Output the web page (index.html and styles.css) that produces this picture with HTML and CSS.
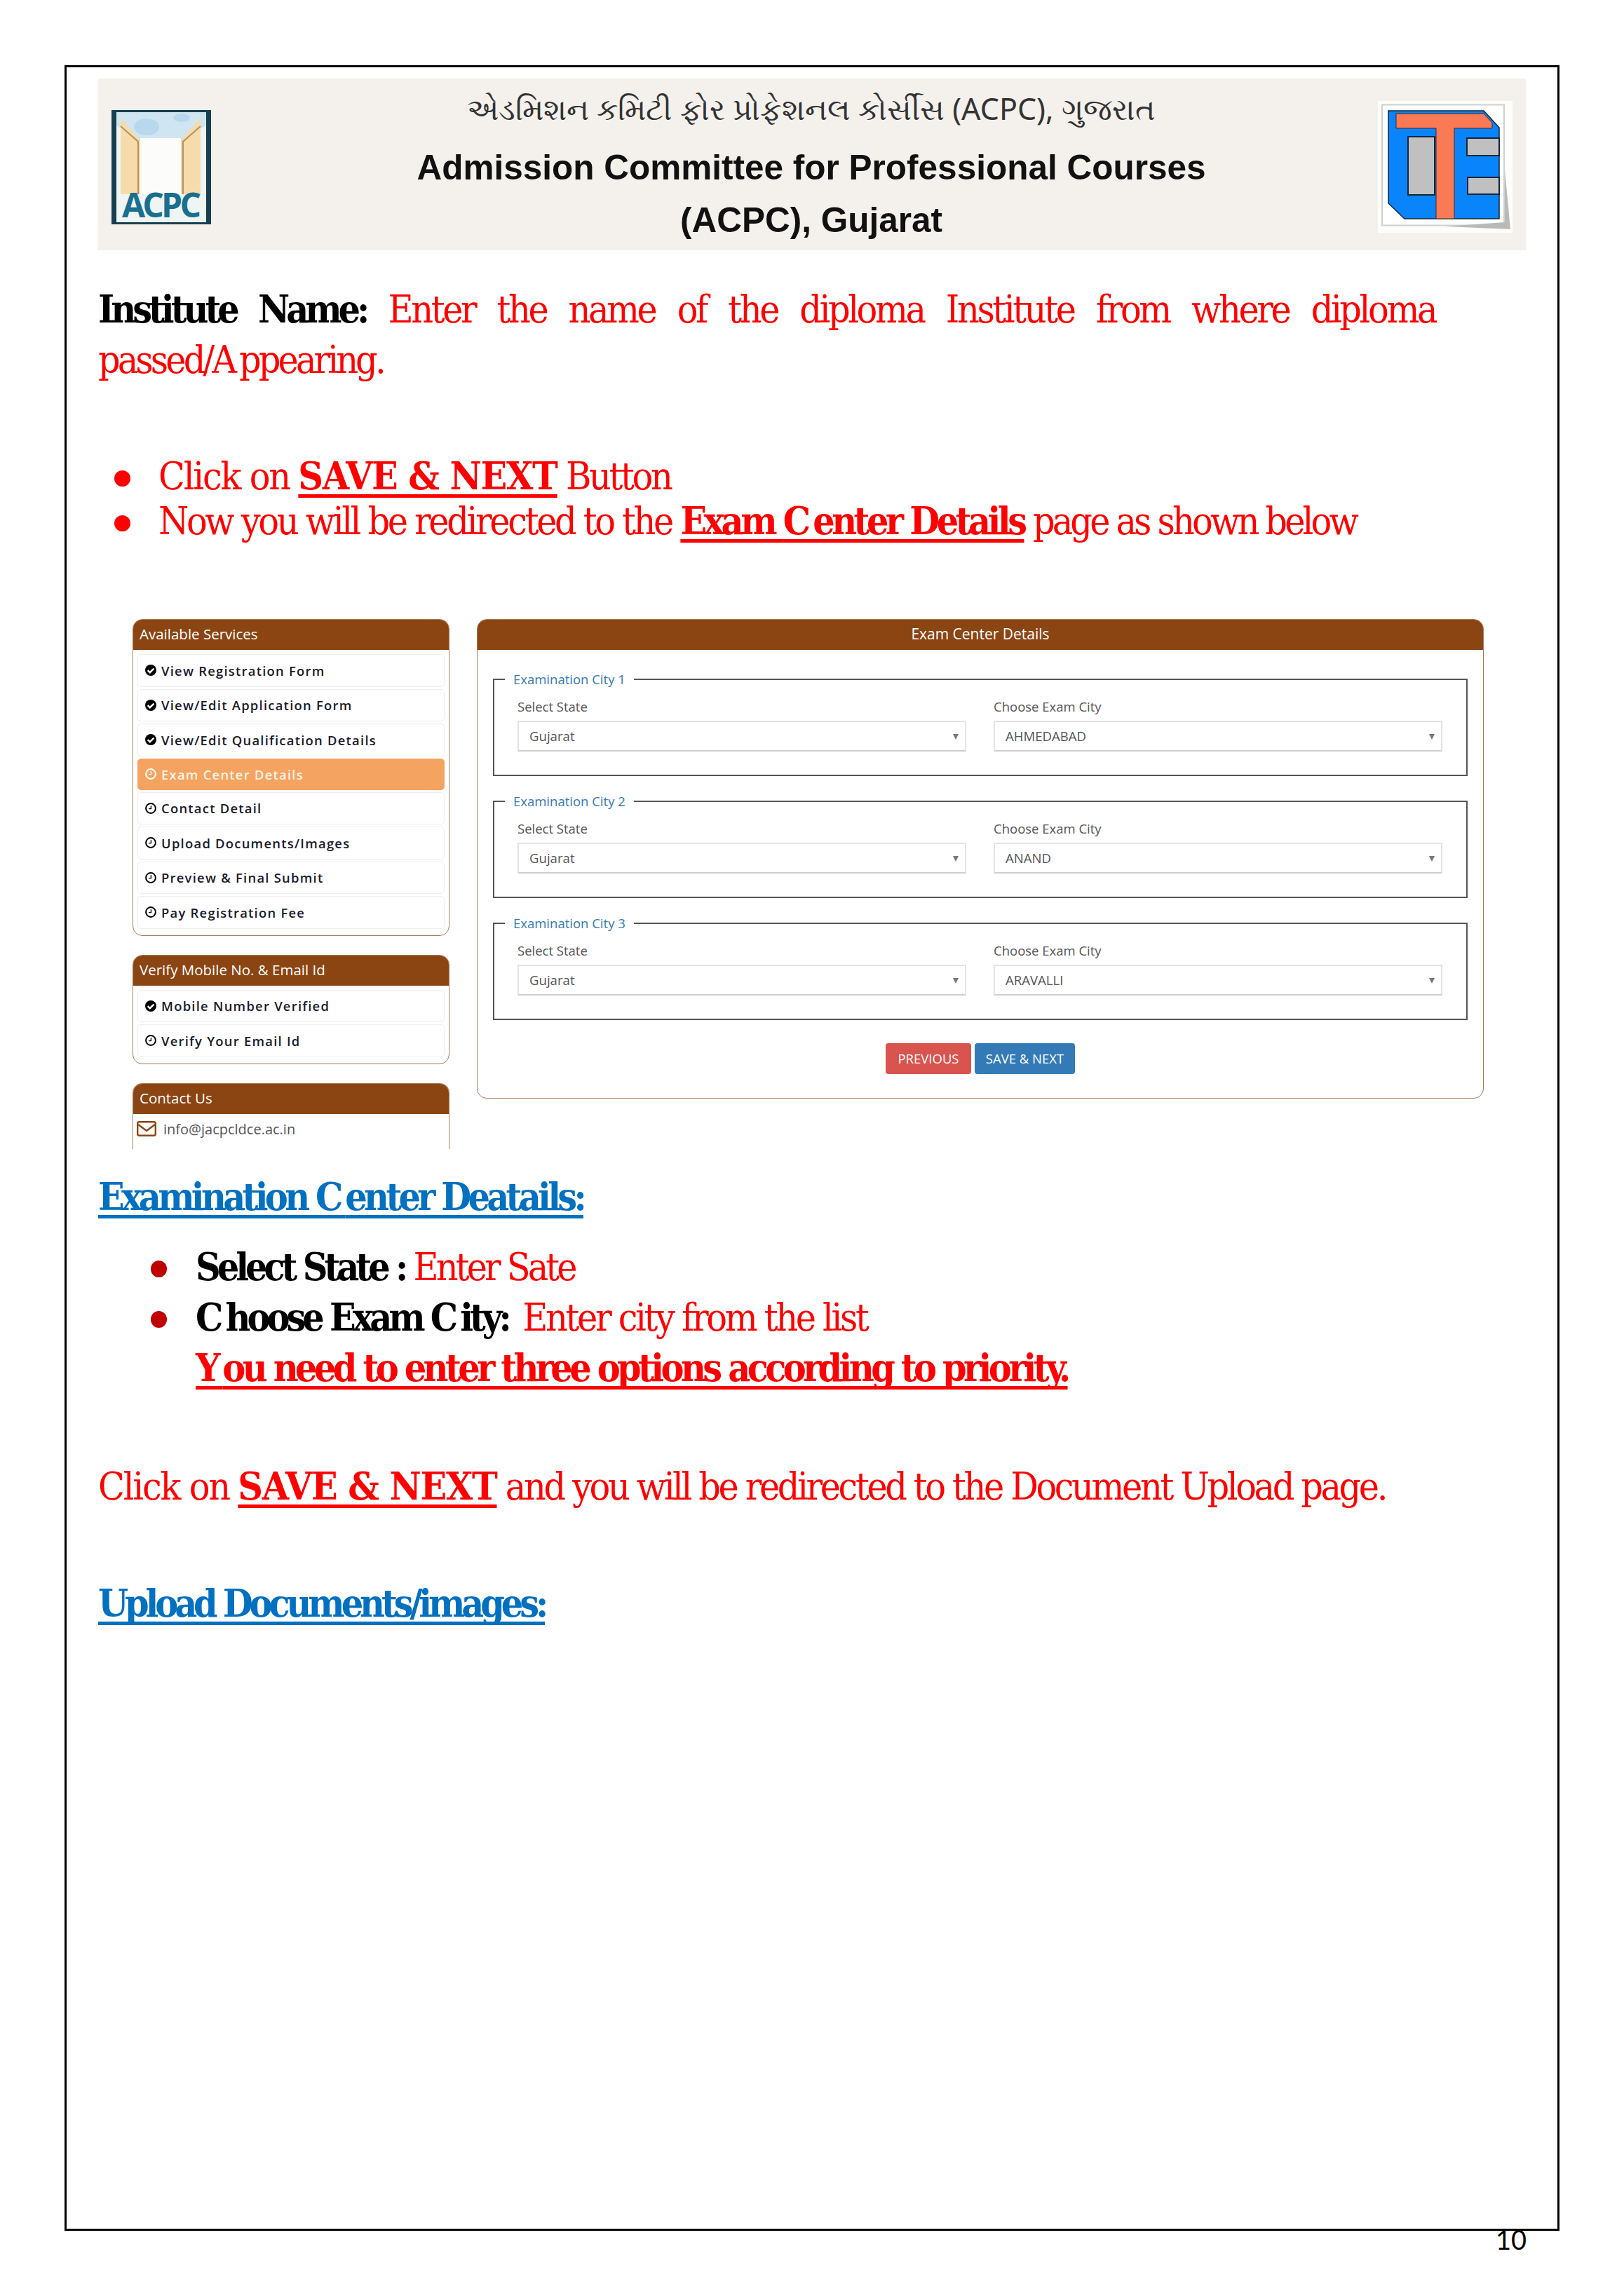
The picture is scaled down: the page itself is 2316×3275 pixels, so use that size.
FILE: index.html
```html
<!DOCTYPE html>
<html lang="en">
<head>
<meta charset="utf-8">
<title>Exam Center Details</title>
<link rel="stylesheet" href="styles.css">
</head>
<body>
<svg class="defs" width="0" height="0" aria-hidden="true">
  <symbol id="ok" viewBox="0 0 16 16"><circle cx="8" cy="8" r="8" fill="currentColor"/><path d="M3.7 8.2 6.8 11.2 12.4 5.6" fill="none" stroke="#fff" stroke-width="2.4"/></symbol>
  <symbol id="clock" viewBox="0 0 16 16"><circle cx="8" cy="8" r="6.9" fill="none" stroke="currentColor" stroke-width="2"/><path d="M8.4 4.2V8.6H5" fill="none" stroke="currentColor" stroke-width="1.4"/></symbol>
</svg>
<div class="page">
  <header class="banner">
    <svg class="logo-acpc" viewBox="0 0 142 163">
      <rect x="0" y="0" width="142" height="163" fill="#163f50"/>
      <rect x="7" y="3" width="128" height="157" fill="#eef5f4"/>
      <path d="M7 3H135V22L100 44H40L7 22Z" fill="#cfe5f2"/>
      <ellipse cx="50" cy="24" rx="18" ry="12" fill="#b9d8ee"/>
      <ellipse cx="100" cy="11" rx="12" ry="6" fill="#b9d8ee"/>
      <path d="M13 11 41 43V120H13Z" fill="#f6dcaa"/>
      <path d="M127 11 99 43V120H127Z" fill="#f6dcaa"/>
      <path d="M13 23 38 45V120" fill="none" stroke="#b9905c" stroke-width="2"/>
      <path d="M127 23 102 45V120" fill="none" stroke="#b9905c" stroke-width="2"/>
      <rect x="41" y="40" width="58" height="80" fill="#fcfdfb"/>
      <text class="logo-text" x="15" y="153" textLength="113" lengthAdjust="spacing">ACPC</text>
    </svg>
    <div class="banner-text">
      <div class="gu">એડમિશન કમિટી ફોર પ્રોફેશનલ કોર્સીસ (ACPC), ગુજરાત</div>
      <div class="en">Admission Committee for Professional Courses</div>
      <div class="en en-second">(ACPC), Gujarat</div>
    </div>
    <svg class="logo-cte" viewBox="4 4 192 188">
      <rect x="4" y="4" width="192" height="188" fill="#fdfdfc"/>
      <rect x="10" y="9.5" width="174" height="172" fill="#fff" stroke="#cfcfcf" stroke-width="2"/>
      <path d="M185 103 193 187 100 183 185 177Z" fill="#b9b9b9"/>
      <path d="M19 18H155L177 42V172H42L19 150Z" fill="#0a84fb" stroke="#12263c" stroke-width="1.5"/>
      <rect x="47" y="55" width="38" height="83" fill="#c0c0c0" stroke="#12263c" stroke-width="2"/>
      <path d="M177 57H131V82H177Z" fill="#c0c0c0" stroke="#12263c" stroke-width="2"/>
      <path d="M177 113H132V137H177Z" fill="#c0c0c0" stroke="#12263c" stroke-width="2"/>
      <path d="M30 22H155L167 35V43H113V172H87V43H30Z" fill="#f97a55" stroke="#3a2a28" stroke-width="1"/>
    </svg>
  </header>

  <p class="para para-first"><span class="just"><b class="black">Institute Name:</b> Enter the name of the diploma Institute from where diploma</span><span class="pass">passed/<span class="gap">A</span>ppearing.</span></p>

  <ul class="list list-top">
    <li><span class="loose">Click on</span> <b class="uc">SAVE &amp; NEXT</b> Button</li>
    <li>Now you will be redirected to the <b class="ub">Exam <span class="gap">C</span>enter Details</b> <span class="end">page as shown below</span></li>
  </ul>

  <section class="shot">
    <div class="side">
      <div class="panel">
        <div class="panel-head">Available Services</div>
        <div class="items">
          <div class="item"><svg class="ic"><use href="#ok"/></svg>View Registration Form</div>
          <div class="item"><svg class="ic"><use href="#ok"/></svg>View/Edit Application Form</div>
          <div class="item"><svg class="ic"><use href="#ok"/></svg>View/Edit Qualification Details</div>
          <div class="item active"><svg class="ic"><use href="#clock"/></svg>Exam Center Details</div>
          <div class="item"><svg class="ic"><use href="#clock"/></svg>Contact Detail</div>
          <div class="item"><svg class="ic"><use href="#clock"/></svg>Upload Documents/Images</div>
          <div class="item"><svg class="ic"><use href="#clock"/></svg>Preview &amp; Final Submit</div>
          <div class="item"><svg class="ic"><use href="#clock"/></svg>Pay Registration Fee</div>
        </div>
      </div>
      <div class="panel">
        <div class="panel-head">Verify Mobile No. &amp; Email Id</div>
        <div class="items">
          <div class="item"><svg class="ic"><use href="#ok"/></svg>Mobile Number Verified</div>
          <div class="item"><svg class="ic"><use href="#clock"/></svg>Verify Your Email Id</div>
        </div>
      </div>
      <div class="panel panel-cut">
        <div class="panel-head">Contact Us</div>
        <div class="contact">
          <svg class="mail" viewBox="0 0 28 22"><rect x="1.2" y="1.2" width="25.6" height="19.6" rx="2.5" fill="none" stroke="#8b4513" stroke-width="2.4"/><path d="M2 5 14 14 26 5" fill="none" stroke="#8b4513" stroke-width="2.4"/></svg>
          <span>info@jacpcldce.ac.in</span>
        </div>
      </div>
    </div>

    <div class="panel main">
      <div class="panel-head center">Exam Center Details</div>
      <div class="form">
        <fieldset class="city">
          <legend>Examination City 1</legend>
          <div class="fields">
            <div class="field"><div class="lbl">Select State</div><div class="select">Gujarat</div></div>
            <div class="field"><div class="lbl">Choose Exam City</div><div class="select">AHMEDABAD</div></div>
          </div>
        </fieldset>
        <fieldset class="city">
          <legend>Examination City 2</legend>
          <div class="fields">
            <div class="field"><div class="lbl">Select State</div><div class="select">Gujarat</div></div>
            <div class="field"><div class="lbl">Choose Exam City</div><div class="select">ANAND</div></div>
          </div>
        </fieldset>
        <fieldset class="city">
          <legend>Examination City 3</legend>
          <div class="fields">
            <div class="field"><div class="lbl">Select State</div><div class="select">Gujarat</div></div>
            <div class="field"><div class="lbl">Choose Exam City</div><div class="select">ARAVALLI</div></div>
          </div>
        </fieldset>
        <div class="buttons">
          <span class="btn btn-prev">PREVIOUS</span>
          <span class="btn btn-next">SAVE &amp; NEXT</span>
        </div>
      </div>
    </div>
  </section>

  <h2 class="heading h-exam">Examination <span class="gap">C</span>enter Deatails:</h2>
  <ul class="list list-sub">
    <li><b class="black">Select State :</b> <span class="sate">Enter Sate</span></li>
    <li><b class="black"><span class="gap">C</span>hoose Exam <span class="gap">C</span>ity:</b> <span class="note">Enter city from the list</span><br><b class="ub tight"><span class="gap">Y</span>ou need to enter three options according to priority.</b></li>
  </ul>
  <p class="para para-click"><span class="loose">Click on</span> <b class="uc">SAVE &amp; NEXT</b> and you will be redirected to the Document Upload page.</p>
  <h2 class="heading h-upload">Upload Documents/images:</h2>
</div>
<div class="pageno">10</div>
</body>
</html>
```

FILE: styles.css
```css
* { box-sizing: border-box; }
html, body { margin: 0; padding: 0; background: #fff; }
body { width: 2316px; height: 3275px; overflow: hidden; font-family: "DejaVu Serif Condensed", "DejaVu Serif", serif; font-stretch: condensed; color: #f00; }
.defs { position: absolute; }

.page { margin: 93px 0 0 92px; width: 2132px; height: 3089px; border: 3px solid #000; padding: 16px 0 0 45px; }

.banner { width: 2036px; height: 245px; background: #f4f1ed; display: flex; align-items: flex-start; }
.logo-acpc { width: 142px; height: 163px; margin: 45px 0 0 19px; flex: none; overflow: visible; }
.logo-text { font: 700 48px/48px "Open Sans", sans-serif; fill: #1a6f8e; }
.banner-text { flex: 1; text-align: center; font-family: "Liberation Sans", sans-serif; color: #111; padding-left: 48px; }
.gu { font-family: "Noto Sans", "Liberation Sans", sans-serif; font-size: 43px; line-height: 60px; margin-top: 13px; color: #333; }
.en { font-weight: bold; font-size: 49.5px; line-height: 74px; margin-top: 17px; }
.en-second { margin-top: 1px; }
.logo-cte { width: 192px; height: 188px; margin: 32px 19px 0 0; flex: none; }

.para { margin: 0; font-size: 55px; line-height: 72px; letter-spacing: -3.4px; }
.para-first { margin-top: 48px; width: 1907px; }
.just { display: block; text-align: justify; text-align-last: justify; }
.pass { letter-spacing: -3.9px; }
.black { color: #000; letter-spacing: -5px; }
.gap { letter-spacing: 3px; }
.loose { letter-spacing: -2.2px; }
.sate { letter-spacing: -3.9px; }
.note { margin-left: 8px; }
.end { letter-spacing: -3.85px; }
.uc, .ub { color: #f00; text-decoration: underline; text-decoration-thickness: 5px; text-underline-offset: 7px; text-decoration-skip-ink: none; }
.uc { letter-spacing: -1.3px; }
.ub { letter-spacing: -4.5px; }
.tight { letter-spacing: -4.6px; }

.list { list-style: none; margin: 0; padding: 0; font-size: 55px; letter-spacing: -3.35px; }
.list li { position: relative; }
.list li::before { content: ""; position: absolute; border-radius: 50%; }
.list-top { margin-top: 98px; padding-left: 86px; line-height: 63px; }
.list-top li::before { left: -63px; top: 24px; width: 23px; height: 23px; background: #f00; }
.list-sub { margin-top: 28px; padding-left: 139px; line-height: 72px; }
.list-sub li::before { left: -64px; top: 27px; width: 23px; height: 24px; background: #c00000; }

.shot { display: flex; height: 756px; margin-top: 108px; overflow: hidden; padding-left: 49px; align-items: flex-start; gap: 39px; }
.side { width: 452px; flex: none; }
.panel { border: 1.5px solid #a9795a; border-radius: 14px; overflow: hidden; background: #fff; margin-bottom: 27px; }
.panel-head { background: #8b4513; color: #fff; font: 20.5px/40px "Open Sans", sans-serif; height: 43px; padding-left: 9px; }
.items { padding: 6px 6px 9px; display: flex; flex-direction: column; gap: 3px; }
.item { height: 46.5px; border: 1px solid #eee; border-radius: 5px; display: flex; align-items: center; padding-left: 10px; font: 600 18.4px "Open Sans", sans-serif; letter-spacing: 1.25px; color: #1a1a2a; }
.item.active { height: 45px; background: #f4a460; border-color: #f4a460; color: #fdf3e8; }
.ic { width: 16px; height: 16px; margin-right: 7px; flex: none; color: #000; }
.active .ic { color: #fff; }
.panel-cut { height: 200px; border-bottom: 0; }
.contact { display: flex; align-items: center; gap: 10px; padding: 8px 0 0 5px; font: 20px "Open Sans", sans-serif; color: #555; }
.mail { width: 28px; height: 22px; flex: none; }

.main { width: 1436px; height: 684px; margin: 0; flex: none; }
.center { text-align: center; padding: 0; font-size: 21px; }
.form { padding: 28px 22px 0 22px; }
.city { margin: 0 0 22px; padding: 0 33px; border: 2px solid #555; min-width: 0; height: 152px; }
.city legend { margin-left: -18px; padding: 0 12px; font: 18.5px/28px "Open Sans", sans-serif; color: #337ab7; }
.fields { display: flex; gap: 39px; }
.field { width: 640px; }
.lbl { font: 18.5px/28px "Open Sans", sans-serif; color: #555; margin-top: 11px; margin-bottom: 6px; }
.select { position: relative; height: 44px; border: 2px solid #e3e3e3; border-bottom-color: #cfcfcf; padding-left: 15px; font: 18.6px/40px "Open Sans", sans-serif; color: #555; }
.select::after { content: ""; position: absolute; right: 9px; top: 17px; border: 4.5px solid transparent; border-top: 8px solid #777; border-bottom: 0; }
.buttons { display: flex; justify-content: center; gap: 5px; margin-top: 33px; }
.btn { height: 44px; border-radius: 4px; color: #fff; font: 18.5px/44px "Open Sans", sans-serif; text-align: center; }
.btn-prev { width: 122px; background: #d9534f; }
.btn-next { width: 143px; background: #337ab7; }

.heading { margin: 0; font-size: 55px; line-height: 72px; font-weight: bold; color: #0070c0; text-decoration: underline; text-decoration-thickness: 5px; text-underline-offset: 7px; text-decoration-skip-ink: none; }
.h-exam { margin-top: 32px; letter-spacing: -4.7px; }
.para-click { margin-top: 97px; }
.h-upload { margin-top: 95px; letter-spacing: -5.1px; }

.pageno { position: absolute; left: 2133px; top: 3172px; font: 38px/44px Lato, sans-serif; color: #000; }
```
